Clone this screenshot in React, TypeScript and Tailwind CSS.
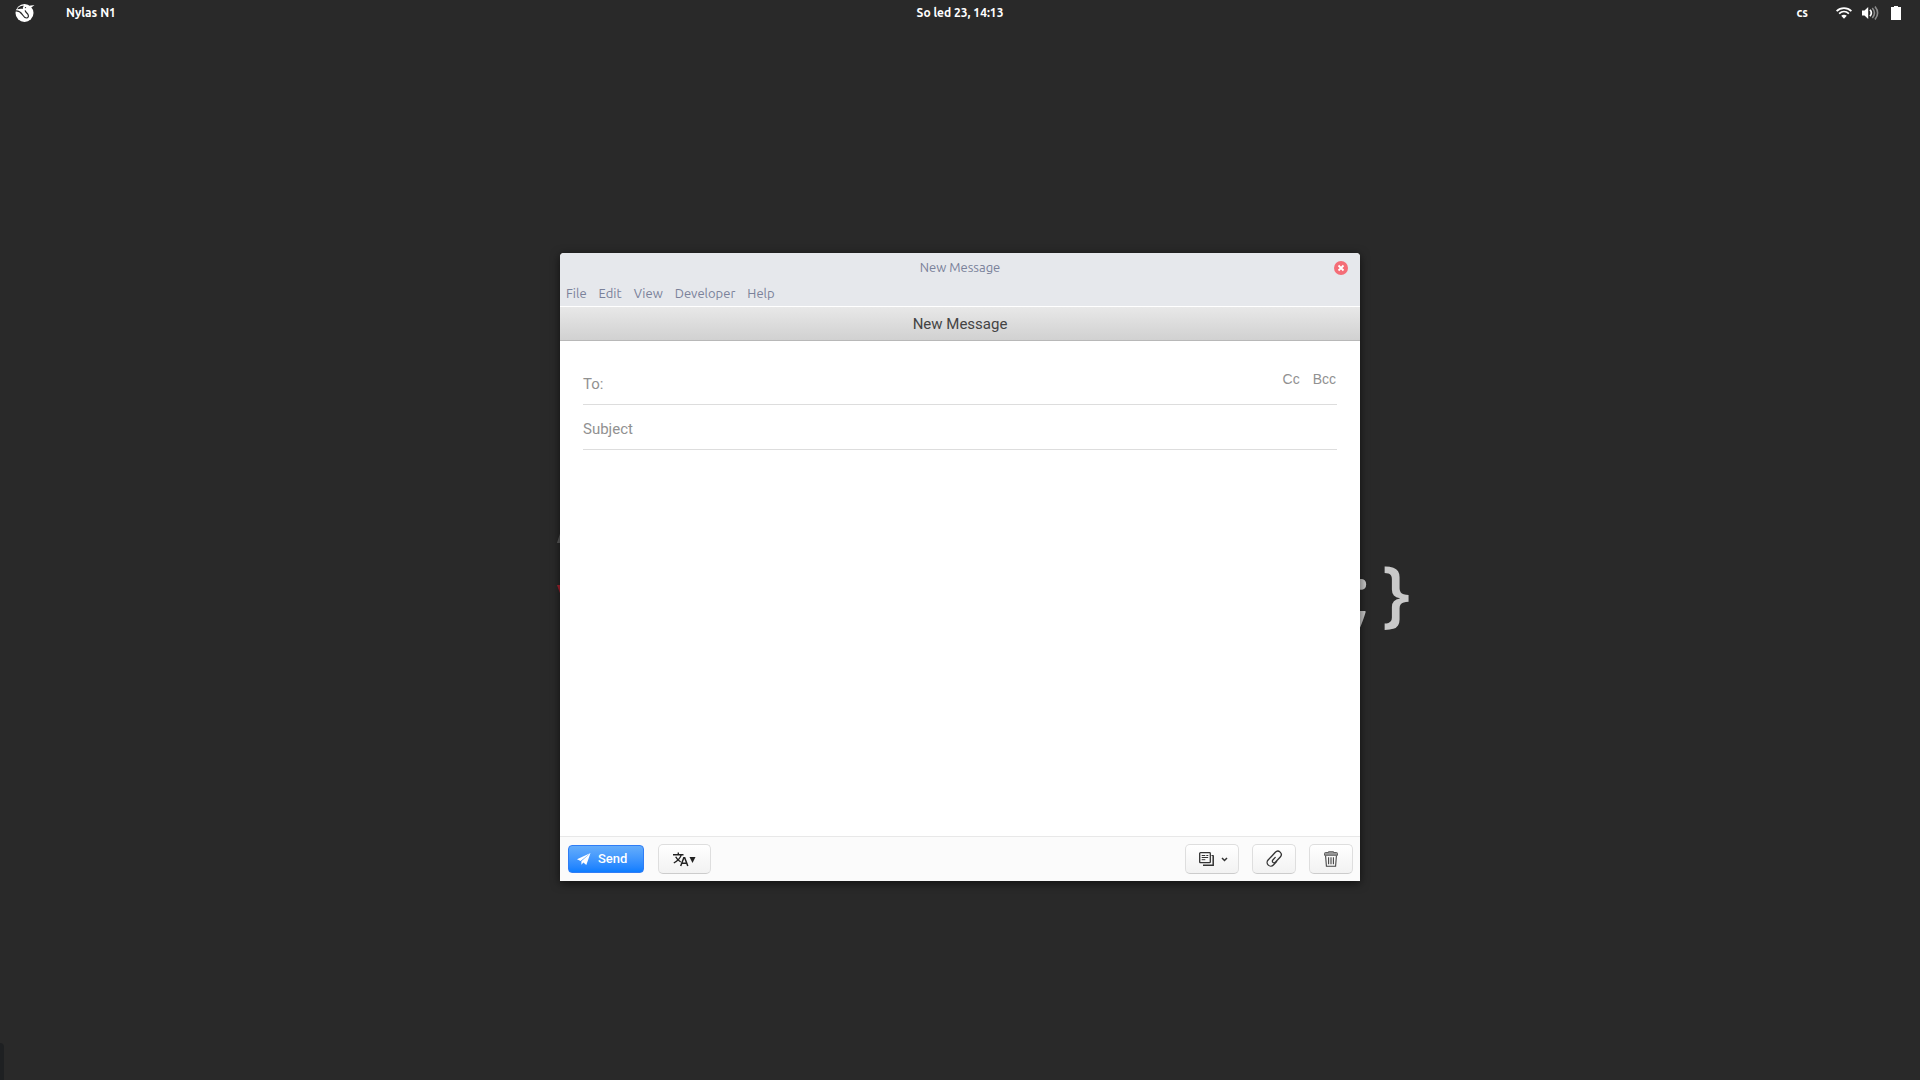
import type { ReactNode } from 'react';

const menus = ['File', 'Edit', 'View', 'Developer', 'Help'];

function BirdLogo() {
  return (
    <svg width="20" height="20" viewBox="0 0 20 20" aria-hidden="true">
      <circle cx="9.500" cy="10" r="9" fill="#fff" />
      <path d="M2.200 6.300C3.500 3.500 6.500 2.200 9 2.800c-1 .9-1.400 2-1.100 3.200-1.900-.5-3.900-.2-5.700.3z" fill="#292929" />
      <path d="M0 8c3.500-.8 5.500 1 7.200 3.300 1.300 2 2 3.600 4.300 3.700 1.600 0 2.300-1.500 1.600-3.300-.7-1.600-2.600-2.300-3-4.300" fill="none" stroke="#292929" strokeWidth="1.200" />
      <circle cx="10.500" cy="4.600" r="0.700" fill="#292929" />
      <path d="M13 3.200c2.200-.8 4.200-1 6.500-.9-1 .9-2 1.300-3.500 2.300z" fill="#fff" />
    </svg>
  );
}

function WifiIcon() {
  return (
    <svg width="16" height="14" viewBox="0 0 16 14" aria-hidden="true">
      <g fill="none" stroke="#fff">
        <path d="M.6 5.200C4.800 1.200 11.200 1.200 15.400 5.200" strokeWidth="1.800" />
        <path d="M3.100 7.700c2.900-2.700 6.900-2.700 9.800 0" strokeWidth="1.700" />
      </g>
      <path d="M5.200 9.800c1.700-1.400 3.900-1.400 5.600 0L8 12.700z" fill="#fff" />
    </svg>
  );
}

function VolumeIcon() {
  return (
    <svg width="17" height="14" viewBox="0 0 17 14" aria-hidden="true">
      <path d="M0 4.500h2.500L6.200 1v12L2.500 9.500H0z" fill="#fff" />
      <path d="M8 3.800c1.600 1.900 1.600 4.500 0 6.400" fill="none" stroke="#fff" strokeWidth="1.700" />
      <path d="M10.300 2c2.600 3 2.600 7 0 10M13 .5c3.200 4 3.200 9 0 13" fill="none" stroke="#8b8b8b" strokeWidth="1.600" />
    </svg>
  );
}

function BatteryIcon() {
  return (
    <svg width="10" height="14" viewBox="0 0 10 14" aria-hidden="true">
      <path d="M3 0h4v1h3v13H0V1h3z" fill="#fff" />
    </svg>
  );
}

function PlaneIcon() {
  return (
    <svg width="14" height="13" viewBox="0 0 14 13" aria-hidden="true">
      <path d="M13.500 0 0 6.300l3.600 1.600z" fill="#fff" />
      <path d="M13.500 0 4.400 8.300v3.500l2-2.300 2.900 2.500z" fill="#fff" />
    </svg>
  );
}

function TranslateIcon() {
  return (
    <svg width="16" height="15" viewBox="0 0 16 15" fill="none" stroke="#222" aria-hidden="true">
      <path d="M0 2.700h10.500M5.300.5v2M8.300 2.900C7.300 6 4.500 9 .8 11M2.700 4.800c1 2 2.700 4 5 5.200" strokeWidth="1.400" />
      <path d="m7.700 14 3.100-8.300h.9L14.800 14M8.800 11.300h5" strokeWidth="1.500" />
    </svg>
  );
}

function TemplateIcon() {
  return (
    <svg width="16" height="15" viewBox="0 0 16 15" fill="none" stroke="#333" aria-hidden="true">
      <rect x="0.700" y="0.700" width="10.600" height="10" rx="0.800" strokeWidth="1.300" />
      <path d="M2.700 3.500h3.600M7.300 3.500h2M2.700 5.500h6.500M2.700 7.700h3.600" strokeWidth="1" />
      <path d="M14.200 3.500v9.800H4" strokeWidth="1.500" />
      <path d="M12.500 3.500h2" strokeWidth="1" />
    </svg>
  );
}

function ClipIcon() {
  return (
    <svg width="18" height="18" viewBox="0 0 18 18" fill="none" stroke="#333" strokeWidth="1.300" strokeLinecap="round" aria-hidden="true">
      <path
        transform="rotate(43 9 9)"
        d="M12.600 9v4.800a3.600 3.600 0 0 1-7.200 0V7.500M5.400 7.500V3.200a3.400 3.400 0 0 1 6.800 0v7.300a1.700 1.700 0 0 1-3.400 0V7"
      />
    </svg>
  );
}

function TrashIcon() {
  return (
    <svg width="14" height="16" viewBox="0 0 14 16" aria-hidden="true">
      <path d="M.5 4.300V2.500c0-.6.400-1 1-1h3V.7h5v.8h3c.6 0 1 .4 1 1v1.800z" fill="#999" stroke="#555" strokeWidth="0.900" />
      <path d="M1.600 4.800l.8 10.500h9.200l.8-10.500M4.600 6.300v7M7 6.300v7M9.400 6.300v7" fill="none" stroke="#444" strokeWidth="1.100" />
    </svg>
  );
}

function ToolButton({ label, className, children }: { label: string; className: string; children: ReactNode }) {
  return (
    <button
      type="button"
      aria-label={label}
      className={`flex h-[30px] items-center justify-center rounded-[5px] border border-[#dedede] border-b-[#cccccc] bg-linear-to-b from-white to-[#f2f2f2] ${className}`}
    >
      {children}
    </button>
  );
}

function TopBar() {
  return (
    <header className="grid h-[26px] grid-cols-3 items-center font-['Ubuntu','Noto_Sans',sans-serif] text-[12px] font-bold text-white">
      <div className="flex items-center gap-[31px] pl-[15px]">
        <BirdLogo />
        <span>Nylas N1</span>
      </div>
      <time className="text-center">So led 23, 14:13</time>
      <div className="flex items-center justify-end pr-[19px]">
        <span className="mr-7">cs</span>
        <div className="flex items-center gap-[10px]">
          <WifiIcon />
          <VolumeIcon />
          <span className="pl-[2px]">
            <BatteryIcon />
          </span>
        </div>
      </div>
    </header>
  );
}

function Wallpaper() {
  return (
    <div className="pointer-events-none absolute inset-0" aria-hidden="true">
      <div className="absolute top-[543px] left-1/2 ml-[391px] flex gap-[11px] font-['Open_Sans',sans-serif] text-[73px] leading-[96px] font-semibold text-[#c9c9c9]">
        <span>;</span>
        <span>{'}'}</span>
      </div>
      <svg className="absolute top-[532px] left-1/2 -ml-[404px]" width="10" height="64" viewBox="0 0 10 64">
        <path d="M1 11 4.500 0H10v11z" fill="#5c5c5c" />
        <path d="M1 53h9v11H5z" fill="#a8222f" />
      </svg>
      <div className="absolute bottom-0 left-0 h-[37px] w-1 rounded-tr-sm bg-[#1e2022]" />
    </div>
  );
}

function Composer() {
  return (
    <section
      aria-label="New Message"
      className="relative flex w-full max-w-[800px] flex-col overflow-hidden rounded-t-[4px] bg-white font-['Roboto',sans-serif] shadow-[0_2px_10px_rgba(0,0,0,0.6)]"
    >
      <div className="border-b border-white bg-[#e6e8ec] font-['Ubuntu','Noto_Sans',sans-serif] text-[13px] text-[#7a819a]">
        <div className="grid h-[29px] grid-cols-[1fr_auto_1fr] items-center pr-3">
          <span className="col-start-2 pl-3">New Message</span>
          <button type="button" aria-label="Close" className="justify-self-end">
            <svg width="14" height="14" viewBox="0 0 14 14">
              <circle cx="7" cy="7" r="7" fill="#f46d77" />
              <path d="m4.500 4.500 5 5m0-5-5 5" stroke="#fff" strokeWidth="1.800" />
            </svg>
          </button>
        </div>
        <nav className="flex h-6 items-center gap-3 px-[6px]">
          {menus.map((m) => (
            <button key={m} type="button">
              {m}
            </button>
          ))}
        </nav>
      </div>
      <h1 className="flex h-[34px] items-center justify-center border-b border-[#b8b8b8] bg-linear-to-b from-[#e8e8e8] to-[#d1d1d1] pt-[2px] text-[15px] text-[#444]">
        New Message
      </h1>
      <form className="flex flex-col px-[23px] pt-[19px]" onSubmit={(e) => e.preventDefault()}>
        <div className="flex h-[45px] items-center border-b border-[#dddddd]">
          <label htmlFor="to" className="pt-1 text-[15px] text-[#919191]">
            To:
          </label>
          <input id="to" type="text" className="min-w-0 flex-1 px-2 text-[15px] outline-none" />
          <div className="flex gap-[13px] self-start pt-[9px] pr-px font-['Liberation_Sans',sans-serif] text-[14px] text-[#919191]">
            <button type="button">Cc</button>
            <button type="button">Bcc</button>
          </div>
        </div>
        <input
          type="text"
          aria-label="Subject"
          placeholder="Subject"
          className="h-[45px] border-b border-[#dddddd] pt-1 text-[15px] outline-none placeholder:text-[#919191]"
        />
        <textarea aria-label="Message body" className="h-[386px] resize-none outline-none" />
      </form>
      <footer className="flex items-center border-t border-[#e8e8e8] bg-[#fbfbfb] py-[7px] pr-[7px] pl-2">
        <button
          type="button"
          className="flex h-7 w-[76px] items-center gap-[7px] rounded-[4px] border border-[#2f7df6] bg-linear-to-b from-[#64adfb] to-[#0b7dff] pl-2 text-[13px] font-medium text-white"
        >
          <PlaneIcon />
          Send
        </button>
        <ToolButton label="Translate" className="ml-[14px] w-[53px]">
          <TranslateIcon />
          <svg className="mt-px" width="7" height="6" viewBox="0 0 7 6">
            <path d="M.5 0h6l-3 6z" fill="#222" />
          </svg>
        </ToolButton>
        <div className="ml-auto flex gap-[13px]">
          <ToolButton label="Templates" className="w-[54px] gap-[6px] pl-[2px]">
            <TemplateIcon />
            <svg width="7" height="5" viewBox="0 0 7 5">
              <path d="m1 1 2.500 2.500L6 1" fill="none" stroke="#333" strokeWidth="1.500" />
            </svg>
          </ToolButton>
          <ToolButton label="Attach file" className="w-[44px]">
            <ClipIcon />
          </ToolButton>
          <ToolButton label="Delete draft" className="w-[44px]">
            <TrashIcon />
          </ToolButton>
        </div>
      </footer>
    </section>
  );
}

export default function App() {
  return (
    <div className="relative flex min-h-screen flex-col bg-[#292929]">
      <Wallpaper />
      <TopBar />
      <main className="flex flex-1 items-center justify-center pt-7">
        <Composer />
      </main>
    </div>
  );
}
